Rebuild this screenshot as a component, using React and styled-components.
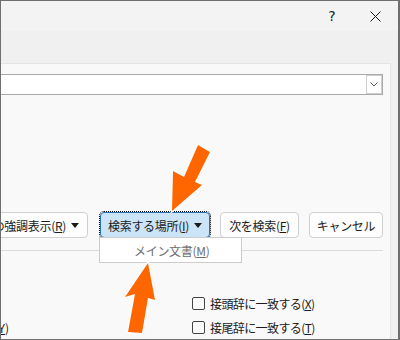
import { createGlobalStyle, styled } from "styled-components";

const GlobalStyle = createGlobalStyle`
  html, body {
    margin: 0;
    padding: 0;
    background: #ffffff;
  }
  body {
    font-family: "Noto Sans CJK JP", "Noto Sans", sans-serif;
  }
`;

const Frame = styled.div`
  position: relative;
  width: 400px;
  height: 340px;
  box-sizing: border-box;
  border: 1px solid #6f6f6f;
  border-right-width: 2px;
  display: flex;
  flex-direction: column;
  overflow: hidden;
  background: #f0f0f0;
`;

const TitleBar = styled.div`
  height: 30px;
  flex-shrink: 0;
  background: #f3f3f3;
  display: flex;
  justify-content: flex-end;
`;

const CaptionButton = styled.div`
  width: 46px;
  height: 30px;
  box-sizing: border-box;
  padding-left: ${(p) => p.$shift || 0}px;
  display: flex;
  align-items: center;
  justify-content: center;
  color: #1a1a1a;
  font-family: "DejaVu Sans", sans-serif;
  font-size: 14px;
`;

const Body = styled.div`
  flex: 1;
  display: flex;
  padding: 32px 7px 0 0;
  min-height: 0;
`;

const Panel = styled.div`
  flex: 1;
  background: #f9f9f9;
  border-top: 1px solid #e4e4e4;
  border-right: 1px solid #e4e4e4;
  padding: 10px 7px 0 0;
  display: flex;
  flex-direction: column;
  min-width: 0;
`;

const SearchBox = styled.div`
  height: 23px;
  box-sizing: border-box;
  margin-left: -20px;
  background: #ffffff;
  border: 1px solid #a9a9a9;
  display: flex;
  justify-content: flex-end;
`;

const DropToggle = styled.div`
  width: 16px;
  box-sizing: border-box;
  border: 1px solid #cfcfcf;
  display: flex;
  align-items: center;
  justify-content: center;
`;

const ButtonRow = styled.div`
  margin-top: 117px;
  display: flex;
  justify-content: flex-end;
  gap: 10px;
`;

const Button = styled.div`
  flex-shrink: 0;
  height: 26px;
  box-sizing: border-box;
  padding: 0 ${(p) => (p.$w ? 0 : 8)}px;
  width: ${(p) => (p.$w ? `${p.$w}px` : "auto")};
  margin-right: ${(p) => p.$after || 0}px;
  display: flex;
  align-items: center;
  justify-content: center;
  gap: 5px;
  white-space: nowrap;
  font-size: 12px;
  letter-spacing: -0.3px;
  color: #1b1b1b;
  background: ${(p) => (p.$active ? "#cce4f7" : "#fdfdfd")};
  border: 1px solid ${(p) => (p.$active ? "#2a6fb0" : "#d0d0d0")};
  border-radius: 4px;
  outline: ${(p) => (p.$active ? "1px dotted #000" : "none")};
  outline-offset: 0;
`;

const MenuAnchor = styled.div`
  position: relative;
  flex-shrink: 0;
  display: flex;
`;

const Menu = styled.div`
  position: absolute;
  top: calc(100% - 1px);
  left: -1px;
  width: 143px;
  height: 26px;
  box-sizing: border-box;
  background: #ffffff;
  border: 1px solid #cccccc;
  display: flex;
  align-items: center;
  padding-left: 34px;
  font-size: 12px;
  letter-spacing: -0.3px;
  color: #6d6d6d;
  white-space: nowrap;
  z-index: 2;
`;

const Separator = styled.div`
  margin-top: 12px;
  margin-left: -20px;
  height: 1px;
  background: #dadada;
`;

const Options = styled.div`
  margin-top: 40px;
  display: grid;
  grid-template-columns: 191px 1fr;
  grid-auto-rows: 24px;
`;

const ClippedCell = styled.div`
  display: flex;
  align-items: center;
`;

const Clip = styled.div`
  width: 8px;
  overflow: hidden;
  display: flex;
  justify-content: flex-end;
  white-space: nowrap;
  font-size: 12px;
  color: #1b1b1b;
`;

const Option = styled.label`
  display: flex;
  align-items: center;
  gap: 5px;
  font-size: 12px;
  letter-spacing: -0.6px;
  color: #1b1b1b;
  white-space: nowrap;
`;

const CheckBox = styled.span`
  width: 13px;
  height: 13px;
  box-sizing: border-box;
  border: 1px solid #444;
  border-radius: 2px;
  background: #fbfbfb;
  flex-shrink: 0;
`;

const Overlay = styled.svg`
  position: absolute;
  top: -1px;
  left: -1px;
  width: 400px;
  height: 340px;
  pointer-events: none;
  z-index: 5;
`;

const Caret = () => (
  <svg width="8" height="5" viewBox="0 0 8 5">
    <path d="M0 0 H8 L4 5 Z" fill="#1b1b1b" />
  </svg>
);

export default function App() {
  return (
    <>
      <GlobalStyle />
      <Frame>
        <TitleBar>
          <CaptionButton $shift={6}>?</CaptionButton>
          <CaptionButton>
            <svg width="11" height="11" viewBox="0 0 11 11">
              <path d="M0.5 0.5 L10.5 10.5 M10.5 0.5 L0.5 10.5" stroke="#1a1a1a" strokeWidth="1" />
            </svg>
          </CaptionButton>
        </TitleBar>
        <Body>
          <Panel>
            <SearchBox>
              <DropToggle>
                <svg width="8" height="5" viewBox="0 0 8 5">
                  <path d="M0.5 0.5 L4 4 L7.5 0.5" fill="none" stroke="#555" strokeWidth="1" />
                </svg>
              </DropToggle>
            </SearchBox>
            <ButtonRow>
              <Button $after={2}>
                <span>
                  検索された項目の強調表示(<u>R</u>)
                </span>
                <Caret />
              </Button>
              <MenuAnchor>
                <Button $active $w={110}>
                  <span>
                    検索する場所(<u>I</u>)
                  </span>
                  <Caret />
                </Button>
                <Menu>
                  <span>
                    メイン文書(<u>M</u>)
                  </span>
                </Menu>
              </MenuAnchor>
              <Button $w={79}>
                <span>
                  次を検索(<u>F</u>)
                </span>
              </Button>
              <Button $w={74}>キャンセル</Button>
            </ButtonRow>
            <Separator />
            <Options>
              <div />
              <Option>
                <CheckBox />
                <span>
                  接頭辞に一致する(<u>X</u>)
                </span>
              </Option>
              <ClippedCell>
                <Clip>
                  <span>
                    完全に一致する単語だけを検索する(<u>Y</u>)
                  </span>
                </Clip>
              </ClippedCell>
              <Option>
                <CheckBox />
                <span>
                  接尾辞に一致する(<u>T</u>)
                </span>
              </Option>
            </Options>
          </Panel>
        </Body>
        <Overlay viewBox="0 0 400 340">
          <g fill="#ff6600" stroke="#ffffff" strokeWidth="2.5" strokeLinejoin="miter" paintOrder="stroke">
            <polygon points="172,211 173,171 184,177 198,145 210,152 195,182 202,185" />
            <polygon points="148,263 125,297 135,294 128,332 142,333 148,298 155,300" />
          </g>
        </Overlay>
      </Frame>
    </>
  );
}
